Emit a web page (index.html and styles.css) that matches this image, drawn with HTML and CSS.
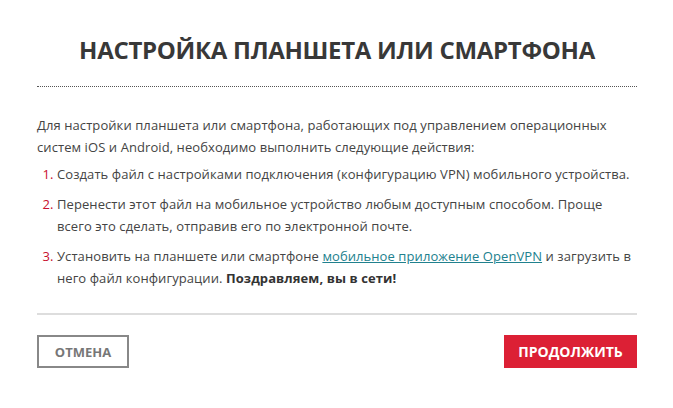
FILE: index.html
```html
<!DOCTYPE html>
<html lang="ru">
<head>
<meta charset="utf-8">
<title>Настройка планшета или смартфона</title>
<link rel="stylesheet" href="styles.css">
</head>
<body>
<div class="dialog">
  <h1 class="title">НАСТРОЙКА ПЛАНШЕТА ИЛИ СМАРТФОНА</h1>
  <p class="intro">Для настройки планшета или смартфона, работающих под управлением операционных систем iOS и Android, необходимо выполнить следующие действия:</p>
  <ol class="steps">
    <li>Создать файл с настройками подключения (конфигурацию VPN) мобильного устройства.</li>
    <li>Перенести этот файл на мобильное устройство любым доступным способом. Проще всего это сделать, отправив его по электронной почте.</li>
    <li>Установить на планшете или смартфоне <a class="link" href="#">мобильное приложение OpenVPN</a> и загрузить в него файл конфигурации. <b>Поздравляем, вы в сети!</b></li>
  </ol>
  <div class="footer">
    <button class="btn btn-cancel">ОТМЕНА</button>
    <button class="btn btn-continue">ПРОДОЛЖИТЬ</button>
  </div>
</div>
</body>
</html>
```
FILE: styles.css
```css
html, body {
  margin: 0;
  padding: 0;
  background: #fff;
}
body {
  font-family: "Open Sans", "DejaVu Sans", sans-serif;
  color: #444;
}
.dialog {
  width: 600px;
  padding: 0 36px 0 37px;
}
.title {
  margin: 0;
  padding: 36px 0 22px;
  font-size: 24px;
  line-height: 28px;
  font-weight: 700;
  color: #383838;
  text-align: center;
  letter-spacing: -0.3px;
  border-bottom: 1px dotted #555;
}
.intro {
  margin: 27px 0 5px;
  font-size: 13px;
  line-height: 22px;
  letter-spacing: 0.08px;
}
.steps {
  margin: 0;
  padding: 0 0 0 20px;
  font-size: 13px;
  line-height: 22px;
  letter-spacing: 0.08px;
}
.steps li + li {
  margin-top: 8px;
}
.steps li::marker {
  color: #c8102e;
}
.link {
  color: #21818e;
  text-decoration: underline;
}
.steps b {
  color: #333;
}
.footer {
  margin-top: 24px;
  border-top: 2px solid #ddd;
  padding-top: 20px;
  display: flex;
  justify-content: space-between;
}
.btn {
  font-family: "Open Sans", "DejaVu Sans", sans-serif;
  font-weight: 700;
  height: 33px;
  font-size: 13px;
  cursor: pointer;
  padding: 0;
}
.btn-cancel {
  width: 92px;
  background: #fff;
  border: 2px solid #888;
  color: #777;
}
.btn-continue {
  width: 133px;
  background: #dc2035;
  border: none;
  color: #fff;
  font-size: 14px;
}
```
